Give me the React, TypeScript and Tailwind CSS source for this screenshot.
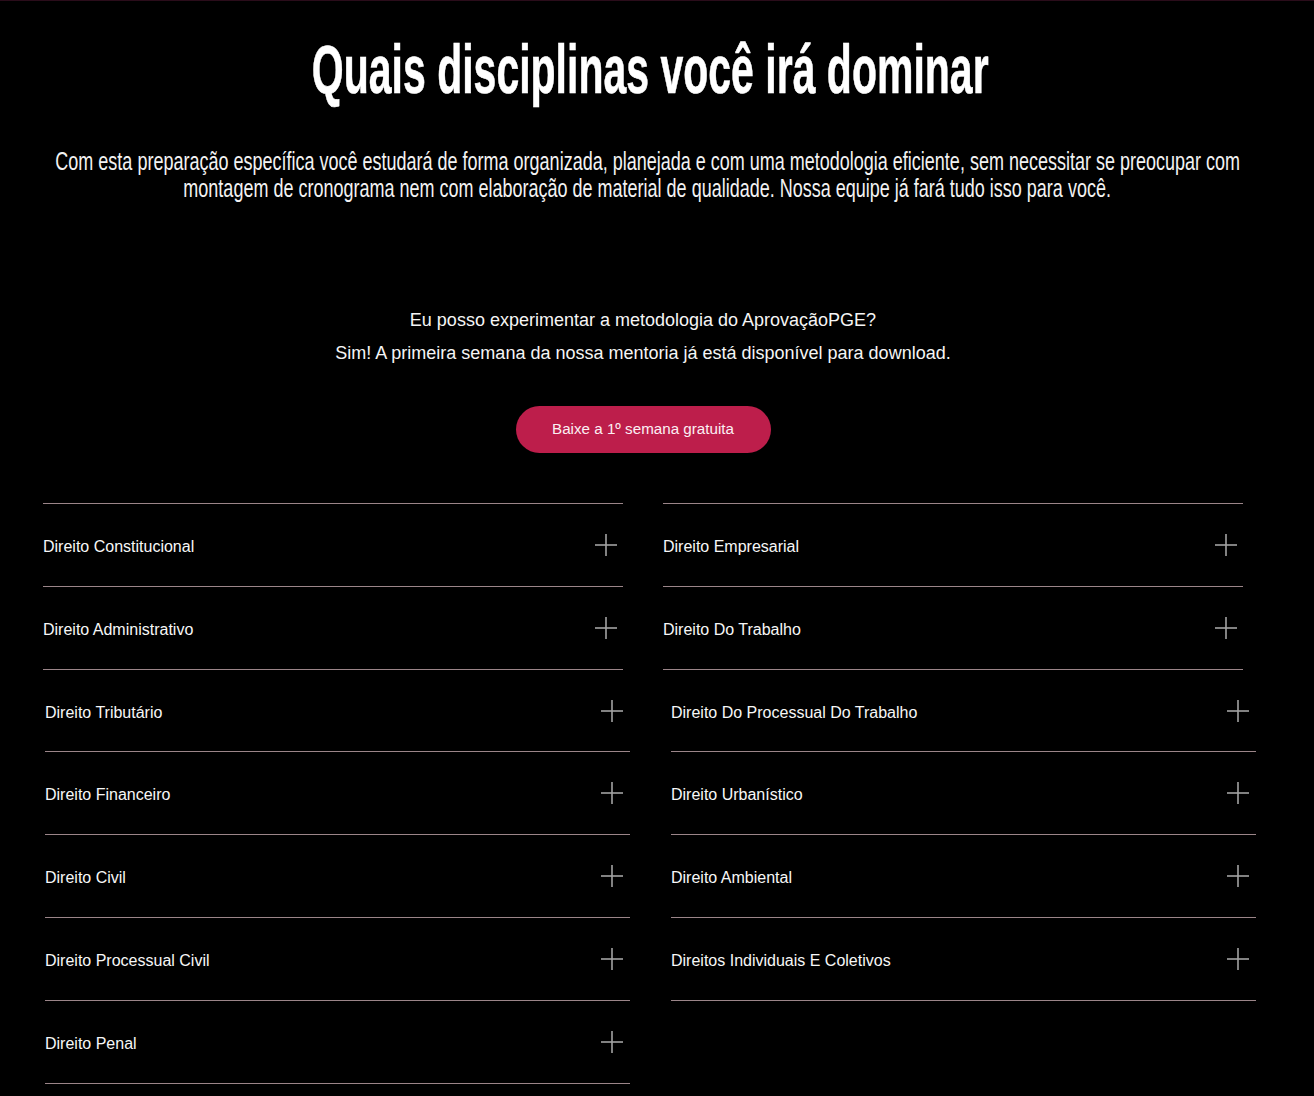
import React from "react";

const left1 = ["Direito Constitucional", "Direito Administrativo"];
const right1 = ["Direito Empresarial", "Direito Do Trabalho"];
const left2 = [
  "Direito Tributário",
  "Direito Financeiro",
  "Direito Civil",
  "Direito Processual Civil",
  "Direito Penal",
];
const right2 = [
  "Direito Do Processual Do Trabalho",
  "Direito Urbanístico",
  "Direito Ambiental",
  "Direitos Individuais E Coletivos",
];

function Plus() {
  return (
    <svg width="22" height="22" viewBox="0 0 22 22" className="shrink-0">
      <line x1="0" y1="11" x2="22" y2="11" stroke="#a3a3a3" strokeWidth="1.6" />
      <line x1="11" y1="0" x2="11" y2="22" stroke="#a3a3a3" strokeWidth="1.6" />
    </svg>
  );
}

function Row({ label, pr, short }: { label: string; pr: string; short?: boolean }) {
  return (
    <button
      type="button"
      className={`flex w-full items-center justify-between border-b border-[#9b8589] text-left ${short ? "h-[82px]" : "h-[83px]"} ${pr}`}
    >
      <span className="mt-[4px] text-[16px] text-[#f7f7f7]">{label}</span>
      <Plus />
    </button>
  );
}

export default function App() {
  return (
    <div className="min-h-screen w-full overflow-x-hidden border-t border-[#2a0c1a] bg-black pb-[12px] font-['Liberation_Sans',Arial,sans-serif] text-white">
      {/* heading */}
      <div className="ml-[45px] flex w-[1211px] flex-col items-center pt-[34px]">
        <h1 className="inline-block scale-x-[0.603] whitespace-nowrap text-[68px] font-bold leading-none [-webkit-text-stroke:0.6px_white]">
          Quais disciplinas você irá dominar
        </h1>
        <p className="mt-[45px] flex flex-col items-center pr-[6px] text-[25px] leading-[27px] text-[#f2f2f2]">
          <span className="inline-block scale-x-[0.72] whitespace-nowrap">
            Com esta preparação específica você estudará de forma organizada, planejada e com uma metodologia eficiente, sem necessitar se preocupar com
          </span>
          <span className="inline-block scale-x-[0.72] whitespace-nowrap">
            montagem de cronograma nem com elaboração de material de qualidade. Nossa equipe já fará tudo isso para você.
          </span>
        </p>
      </div>

      {/* free week */}
      <div className="ml-[43px] w-[1200px] text-center">
        <div className="mt-[102px] text-[18px] leading-[33px] text-[#f5f5f5]">
          <p>Eu posso experimentar a metodologia do AprovaçãoPGE?</p>
          <p>Sim! A primeira semana da nossa mentoria já está disponível para download.</p>
        </div>
        <button
          type="button"
          className="mt-[36px] h-[47px] w-[255px] rounded-full bg-[#bd1e4b] text-[15.2px] text-[#fbeff3]"
        >
          Baixe a 1º semana gratuita
        </button>
      </div>

      {/* disciplinas */}
      <div className="mt-[50px] ml-[43px] grid w-[1200px] grid-cols-2 gap-x-[40px]">
        <div className="border-t border-[#9b8589]">
          {left1.map((l) => (
            <Row key={l} label={l} pr="pr-[6px]" />
          ))}
        </div>
        <div className="border-t border-[#9b8589]">
          {right1.map((l) => (
            <Row key={l} label={l} pr="pr-[6px]" />
          ))}
        </div>
      </div>
      <div className="ml-[45px] grid w-[1211px] grid-cols-2 items-start gap-x-[41px]">
        <div>
          {left2.map((l, i) => (
            <Row key={l} label={l} pr="pr-[7px]" short={i === 0} />
          ))}
        </div>
        <div>
          {right2.map((l, i) => (
            <Row key={l} label={l} pr="pr-[7px]" short={i === 0} />
          ))}
        </div>
      </div>
    </div>
  );
}
